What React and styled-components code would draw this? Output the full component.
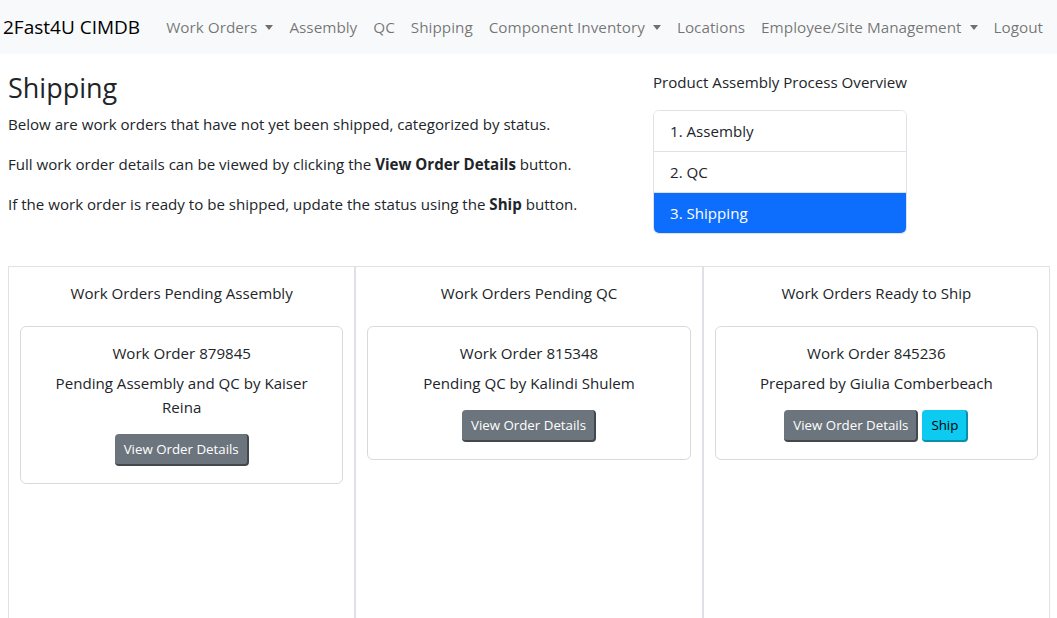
import React from 'react';
import styled, { createGlobalStyle } from 'styled-components';

const GlobalStyle = createGlobalStyle`
  body {
    margin: 0;
    font-family: 'Open Sans', 'Noto Sans', sans-serif;
    font-size: 15.1px;
    line-height: 24px;
    color: #212529;
    background: #ffffff;
  }
  * { box-sizing: border-box; }
`;

const Navbar = styled.nav`
  display: flex;
  align-items: center;
  height: 54px;
  background-color: #f8f9fa;
  padding: 0 3px;
`;

const Brand = styled.div`
  font-size: 19px;
  color: #000000;
  margin-right: 18px;
  white-space: nowrap;
`;

const NavLinks = styled.div`
  display: flex;
  align-items: center;
`;

const NavLink = styled.a`
  display: flex;
  align-items: center;
  padding: 8px;
  font-size: 15.3px;
  color: rgba(0, 0, 0, 0.55);
  white-space: nowrap;
  text-decoration: none;
`;

const Caret = styled.span`
  display: inline-block;
  margin-left: 8px;
  border-top: 5px solid rgba(0, 0, 0, 0.55);
  border-left: 4px solid transparent;
  border-right: 4px solid transparent;
`;

const TopRow = styled.div`
  display: flex;
  padding: 16px 8px 0;
  margin-bottom: 32px;
`;

const Intro = styled.div`
  width: 645px;
`;

const Title = styled.h2`
  font-size: 27px;
  font-weight: 400;
  line-height: 36px;
  margin: 0 0 6px;
`;

const Para = styled.p`
  margin: 0 0 16px;
`;

const Overview = styled.div`
  width: 254px;
`;

const OverviewTitle = styled.div`
  margin-bottom: 16px;
  white-space: nowrap;
`;

const ListGroup = styled.div`
  border: 1px solid #dee2e6;
  border-radius: 6px;
  overflow: hidden;
`;

const ListItem = styled.div`
  padding: 8px 16px;
  border-top: ${p => (p.$first ? 'none' : '1px solid #dee2e6')};
  background: ${p => (p.$active ? '#0d6efd' : '#ffffff')};
  color: ${p => (p.$active ? '#ffffff' : '#212529')};
`;

const Columns = styled.div`
  display: flex;
  margin: 0 7px 0 8px;
`;

const Column = styled.section`
  flex: 1;
  min-height: 420px;
  border: 1px solid #dee2e6;
  padding: 14px 11px;
`;

const ColumnTitle = styled.div`
  text-align: center;
  margin-bottom: 21px;
`;

const Card = styled.div`
  border: 1px solid rgba(0, 0, 0, 0.15);
  border-radius: 6px;
  padding: 14px 16px 17px;
  text-align: center;
`;

const CardLine = styled.div`
  margin-bottom: ${p => (p.$last ? '15px' : '6px')};
`;

const Buttons = styled.div`
  display: flex;
  justify-content: center;
  gap: 4px;
`;

const Button = styled.button`
  font-family: inherit;
  font-size: 13.3px;
  line-height: 21px;
  padding: 5px 8px 4px 9px;
  border: none;
  border-radius: 4px;
  border-right: 2px solid ${p => (p.$info ? '#0a8fab' : '#43484d')};
  border-bottom: 2px solid ${p => (p.$info ? '#0a8fab' : '#43484d')};
  background: ${p => (p.$info ? '#0dcaf0' : '#6c757d')};
  color: ${p => (p.$info ? '#000000' : '#ffffff')};
`;

const navItems = [
  { label: 'Work Orders', drop: true },
  { label: 'Assembly' },
  { label: 'QC' },
  { label: 'Shipping' },
  { label: 'Component Inventory', drop: true },
  { label: 'Locations' },
  { label: 'Employee/Site Management', drop: true },
  { label: 'Logout' },
];

const columns = [
  {
    title: 'Work Orders Pending Assembly',
    order: '879845',
    note: 'Pending Assembly and QC by Kaiser Reina',
  },
  {
    title: 'Work Orders Pending QC',
    order: '815348',
    note: 'Pending QC by Kalindi Shulem',
  },
  {
    title: 'Work Orders Ready to Ship',
    order: '845236',
    note: 'Prepared by Giulia Comberbeach',
    ship: true,
  },
];

export default function App() {
  return (
    <>
      <GlobalStyle />
      <Navbar>
        <Brand>2Fast4U CIMDB</Brand>
        <NavLinks>
          {navItems.map(item => (
            <NavLink key={item.label}>
              {item.label}
              {item.drop && <Caret />}
            </NavLink>
          ))}
        </NavLinks>
      </Navbar>
      <TopRow>
        <Intro>
          <Title>Shipping</Title>
          <Para>Below are work orders that have not yet been shipped, categorized by status.</Para>
          <Para>
            Full work order details can be viewed by clicking the <b>View Order Details</b> button.
          </Para>
          <Para>
            If the work order is ready to be shipped, update the status using the <b>Ship</b> button.
          </Para>
        </Intro>
        <Overview>
          <OverviewTitle>Product Assembly Process Overview</OverviewTitle>
          <ListGroup>
            <ListItem $first>1. Assembly</ListItem>
            <ListItem>2. QC</ListItem>
            <ListItem $active>3. Shipping</ListItem>
          </ListGroup>
        </Overview>
      </TopRow>
      <Columns>
        {columns.map(col => (
          <Column key={col.title}>
            <ColumnTitle>{col.title}</ColumnTitle>
            <Card>
              <CardLine>Work Order {col.order}</CardLine>
              <CardLine $last>{col.note}</CardLine>
              <Buttons>
                <Button>View Order Details</Button>
                {col.ship && <Button $info>Ship</Button>}
              </Buttons>
            </Card>
          </Column>
        ))}
      </Columns>
    </>
  );
}
